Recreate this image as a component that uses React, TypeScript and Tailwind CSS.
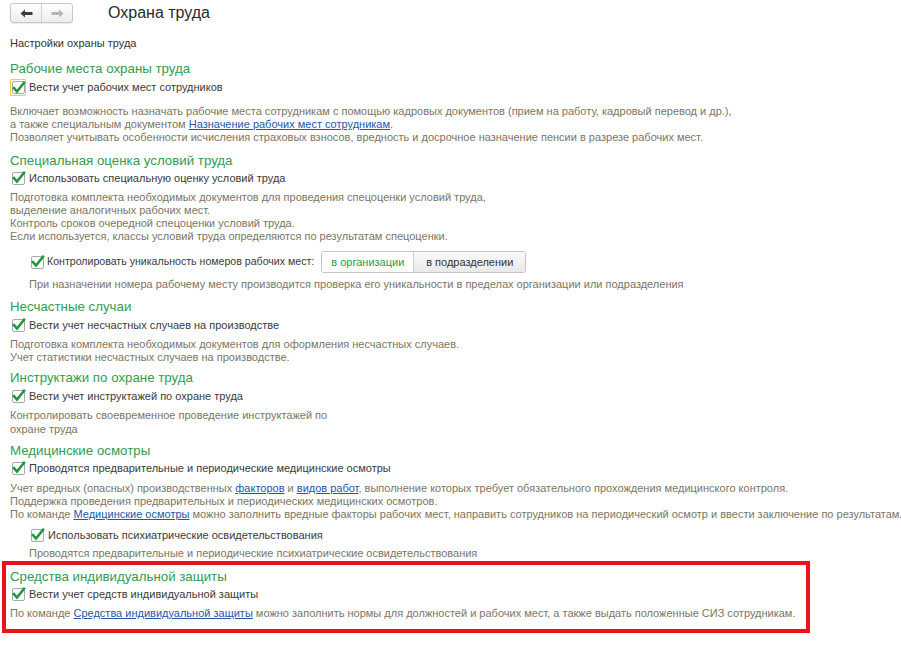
import React from "react";

const FONT = { fontFamily: '"Liberation Sans", Arial, sans-serif' };

function Check({ focus = false }: { focus?: boolean }) {
  return (
    <span
      className={
        "relative flex h-[17px] w-[16px] shrink-0 items-center justify-center " +
        (focus ? "border border-[#f0cf3c] rounded-[1px]" : "")
      }
    >
      <span className="block h-[13px] w-[13px] rounded-[2px] border border-[#a9a9a9] bg-white" />
      <svg
        className={"absolute top-[1px] " + (focus ? "left-[1px]" : "left-[2px]")}
        width="14"
        height="13"
        viewBox="0 0 14 13"
      >
        <path
          d="M2 7.2 L5 10.5 L12 1.8"
          fill="none"
          stroke="#1d9a3c"
          strokeWidth="2.6"
          strokeLinecap="square"
          strokeLinejoin="miter"
        />
      </svg>
    </span>
  );
}

function CheckRow({
  label,
  focus = false,
}: {
  label: string;
  focus?: boolean;
}) {
  return (
    <div className="flex h-[18px] items-center">
      <Check focus={focus} />
      <span className="ml-[3px] text-[11px] text-[#3a3a3a] whitespace-nowrap">{label}</span>
    </div>
  );
}

function Heading({ children }: { children: React.ReactNode }) {
  return (
    <div className="h-[18px] text-[13.3px] leading-[18px] text-[#2f9d4e] whitespace-nowrap">
      {children}
    </div>
  );
}

function Desc({ className = "", children }: { className?: string; children: React.ReactNode }) {
  return (
    <div className={"text-[11px] leading-[13px] text-[#7a7663] whitespace-nowrap " + className}>
      {children}
    </div>
  );
}

function Link({ children }: { children: React.ReactNode }) {
  return <span className="text-[#2357a8] underline underline-offset-[1px]">{children}</span>;
}

export default function App() {
  return (
    <div className="h-[646px] w-[901px] overflow-hidden bg-white" style={FONT}>
      {/* top bar */}
      <div className="mt-[3px] flex h-[20px] items-center pl-[10px]">
        <div className="flex h-[20px] w-[63px] overflow-hidden rounded-[3px] border border-[#c6c6c6] bg-gradient-to-b from-white to-[#ececec] shadow-[0_1px_1px_rgba(0,0,0,0.08)]">
          <div className="flex flex-1 items-center justify-center border-r border-[#d2d2d2]">
            <svg width="13" height="9" viewBox="0 0 13 9">
              <path d="M0.5 4.5 L5 0.5 L5 3 L12.5 3 L12.5 6 L5 6 L5 8.5 Z" fill="#3c3c3c" />
            </svg>
          </div>
          <div className="flex flex-1 items-center justify-center">
            <svg width="13" height="9" viewBox="0 0 13 9">
              <path d="M12.5 4.5 L8 0.5 L8 3 L0.5 3 L0.5 6 L8 6 L8 8.5 Z" fill="#b5b5b5" />
            </svg>
          </div>
        </div>
        <div className="ml-[35px] text-[16px] leading-[20px] text-[#2a2a2a]">Охрана труда</div>
      </div>

      <div className="px-[10px]">
        <div className="mt-[12px] h-[16px] text-[11px] leading-[16px] text-[#333]">Настройки охраны труда</div>

        {/* Section 1 */}
        <div className="mt-[9px]">
          <Heading>Рабочие места охраны труда</Heading>
          <CheckRow label="Вести учет рабочих мест сотрудников" focus />
          <Desc className="mt-[9px]">
            <div>
              Включает возможность назначать рабочие места сотрудникам с помощью кадровых документов (прием на работу, кадровый перевод и др.),
            </div>
            <div>
              а также специальным документом <Link>Назначение рабочих мест сотрудникам</Link>.
            </div>
            <div>
              Позволяет учитывать особенности исчисления страховых взносов, вредность и досрочное назначение пенсии в разрезе рабочих мест.
            </div>
          </Desc>
        </div>

        {/* Section 2 */}
        <div className="mt-[8px]">
          <Heading>Специальная оценка условий труда</Heading>
          <div className="-mt-[1px]">
            <CheckRow label="Использовать специальную оценку условий труда" />
          </div>
          <Desc className="mt-[4px] leading-[13.7px]">
            <div>Подготовка комплекта необходимых документов для проведения спецоценки условий труда,</div>
            <div>выделение аналогичных рабочих мест.</div>
            <div>Контроль сроков очередной спецоценки условий труда.</div>
            <div>Если используется, классы условий труда определяются по результатам спецоценки.</div>
          </Desc>
          <div className="ml-[19px] mt-[8px]">
            <div className="flex h-[22px] items-center">
              <Check />
              <span className="ml-[2px] text-[10.6px] text-[#3a3a3a] whitespace-nowrap">
                Контролировать уникальность номеров рабочих мест:
              </span>
              <div className="ml-[7px] flex h-[22px] overflow-hidden rounded-[3px] border border-[#c4c4c4] text-[11px]">
                <div className="flex w-[91px] items-center justify-center bg-white text-[#2a9a4c]">
                  в организации
                </div>
                <div className="flex w-[112px] items-center justify-center border-l border-[#cfcfcf] bg-gradient-to-b from-[#fafafa] to-[#e9e9e9] text-[#333]">
                  в подразделении
                </div>
              </div>
            </div>
            <Desc className="mt-[5px]">
              При назначении номера рабочему месту производится проверка его уникальности в пределах организации или подразделения
            </Desc>
          </div>
        </div>

        {/* Section 3 */}
        <div className="mt-[7px]">
          <Heading>Несчастные случаи</Heading>
          <CheckRow label="Вести учет несчастных случаев на производстве" />
          <Desc className="mt-[4px]">
            <div>Подготовка комплекта необходимых документов для оформления несчастных случаев.</div>
            <div>Учет статистики несчастных случаев на производстве.</div>
          </Desc>
        </div>

        {/* Section 4 */}
        <div className="mt-[5px]">
          <Heading>Инструктажи по охране труда</Heading>
          <CheckRow label="Вести учет инструктажей по охране труда" />
          <Desc className="mt-[3px] leading-[14px]">
            <div>Контролировать своевременное проведение инструктажей по</div>
            <div>охране труда</div>
          </Desc>
        </div>

        {/* Section 5 */}
        <div className="mt-[6px]">
          <Heading>Медицинские осмотры</Heading>
          <div className="-mt-[1px]">
            <CheckRow label="Проводятся предварительные и периодические медицинские осмотры" />
          </div>
          <Desc className="mt-[5px]">
            <div>
              Учет вредных (опасных) производственных <Link>факторов</Link> и <Link>видов работ</Link>, выполнение которых требует обязательного прохождения медицинского контроля.
            </div>
            <div>Поддержка проведения предварительных и периодических медицинских осмотров.</div>
            <div>
              По команде <Link>Медицинские осмотры</Link> можно заполнить вредные факторы рабочих мест, направить сотрудников на периодический осмотр и ввести заключение по результатам.
            </div>
          </Desc>
          <div className="ml-[19px] mt-[5px]">
            <div className="flex h-[18px] items-center">
              <Check />
              <span className="ml-[3px] text-[11px] text-[#3a3a3a] whitespace-nowrap">
                Использовать психиатрические освидетельствования
              </span>
            </div>
            <Desc className="mt-[3px]">
              Проводятся предварительные и периодические психиатрические освидетельствования
            </Desc>
          </div>
        </div>
      </div>

      {/* Section 6 highlighted */}
      <div className="ml-[2px] mt-[1px] w-[808px] border-[4px] border-[#e8141c] pb-[9px] pl-[4px] pt-[3px]">
        <Heading>Средства индивидуальной защиты</Heading>
        <div className="-mt-[1px]">
          <CheckRow label="Вести учет средств индивидуальной защиты" />
        </div>
        <Desc className="mt-[4px]">
          По команде <Link>Средства индивидуальной защиты</Link> можно заполнить нормы для должностей и рабочих мест, а также выдать положенные СИЗ сотрудникам.
        </Desc>
      </div>
    </div>
  );
}
